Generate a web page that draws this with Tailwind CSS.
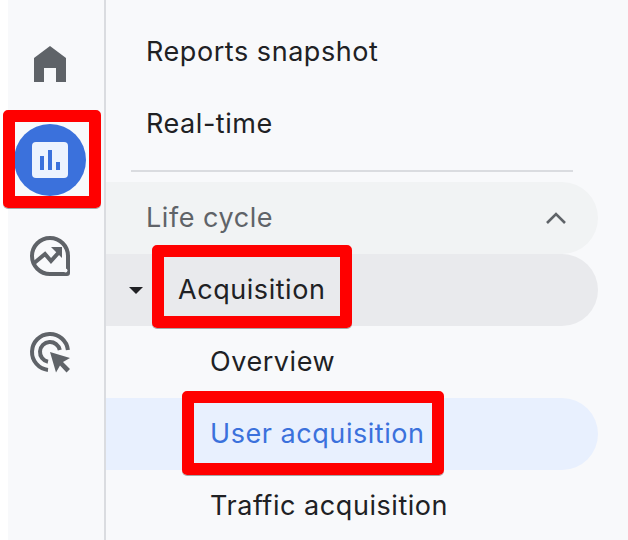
<!DOCTYPE html>
<html lang="en">
<head>
  <meta charset="UTF-8" />
  <title>Reports navigation</title>
  <script src="https://cdn.jsdelivr.net/npm/@tailwindcss/browser@4"></script>
</head>
<body class="bg-white font-['Inter',sans-serif] overflow-hidden">
  <div class="relative w-[628px] h-[540px] overflow-hidden pl-2 flex">
    <!-- icon rail -->
    <div class="w-[96px] bg-[#f8f9fb] pt-4 pr-3 flex flex-col shrink-0">
      <div class="h-24 flex items-center justify-center">
        <svg width="32" height="36" viewBox="0 0 32 36" class="fill-[#5f6368]">
          <path d="M16 0 L32 12 V36 H22 V22 H10 V36 H0 V12 Z" />
        </svg>
      </div>
      <div class="h-24 flex items-center justify-center">
        <div class="w-[72px] h-[72px] shrink-0 rounded-full bg-[#3b71dc] flex items-center justify-center">
          <div class="w-9 h-9 rounded-[4px] bg-[#edf3fe] flex items-end justify-center gap-1 pb-2">
            <div class="w-1 h-[14px] bg-[#3b71dc]"></div>
            <div class="w-1 h-5 bg-[#3b71dc]"></div>
            <div class="w-1 h-2 bg-[#3b71dc]"></div>
          </div>
        </div>
      </div>
      <div class="h-24 flex items-center justify-center">
        <svg width="40" height="40" viewBox="0 0 40 40" fill="none">
          <path d="M20 2 A18 18 0 0 1 38 20 V37 A1 1 0 0 1 37 38 H20 A18 18 0 1 1 20 2 Z" stroke="#5f6368" stroke-width="4" />
          <circle cx="35.5" cy="34.5" r="2" fill="#f8f9fb" />
          <path d="M3 28 L15 18 L21 25 L30 15" stroke="#5f6368" stroke-width="4" />
          <path d="M21 11 H32 V22 Z" fill="#5f6368" />
        </svg>
      </div>
      <div class="h-24 flex items-center justify-center">
        <svg width="40" height="40" viewBox="0 0 40 40" fill="none" class="overflow-visible">
          <path d="M18 37.9 A18 18 0 1 1 37.9 18" stroke="#5f6368" stroke-width="4" />
          <path d="M18 29.8 A10 10 0 1 1 29.8 18" stroke="#5f6368" stroke-width="4" />
          <path d="M20 20 L40 26 L33 30 L40 37 L36.5 40.5 L30 33.5 L26 40.5 Z" fill="#5f6368" />
        </svg>
      </div>
    </div>
    <div class="w-[2px] bg-[#dadce0] shrink-0"></div>

    <!-- nav list -->
    <div class="flex-1 bg-[#f8f9fb] pt-4 pr-[30px] text-[27px] font-normal tracking-[0.55px] text-[#202124]">
      <div class="h-[72px] flex items-center pl-[40px]">Reports snapshot</div>
      <div class="h-[72px] flex items-center pl-[40px]">Real-time</div>
      <div class="h-[22px] flex items-center">
        <div class="ml-[25px] w-[442px] h-[2px] bg-[#dadce0]"></div>
      </div>
      <div class="h-[72px] flex items-center justify-between pl-[40px] pr-[32px] bg-[#f1f3f4] rounded-r-[36px] text-[#5f6368]">
        <span>Life cycle</span>
        <svg width="20" height="12" viewBox="0 0 20 12" fill="none">
          <path d="M1 11 L10 2 L19 11" stroke="#5f6368" stroke-width="2.6" />
        </svg>
      </div>
      <div class="h-[72px] flex items-center pl-[23px] bg-[#e9eaed] rounded-r-[36px]">
        <span class="w-0 h-0 border-x-[7px] border-x-transparent border-t-[7px] border-t-[#202124] mr-[35px]"></span>
        <span>Acquisition</span>
      </div>
      <div class="h-[72px] flex items-center pl-[104px]">Overview</div>
      <div class="h-[72px] flex items-center pl-[104px] bg-[#e8f0fe] rounded-r-[36px] text-[#3b71dc]">User acquisition</div>
      <div class="h-[72px] flex items-center pl-[104px]">Traffic acquisition</div>
    </div>

    <!-- red annotation boxes -->
    <div class="absolute left-[3px] top-[110px] w-[98px] h-[98px] border-[12px] border-[#ff0000] rounded-[5px] shadow-[0_1px_0_#0005]"></div>
    <div class="absolute left-[152px] top-[245px] w-[200px] h-[83px] border-[12px] border-[#ff0000] rounded-[5px] shadow-[0_1px_0_#0005]"></div>
    <div class="absolute left-[182px] top-[391px] w-[262px] h-[84px] border-[12px] border-[#ff0000] rounded-[5px] shadow-[0_1px_0_#0005]"></div>
  </div>
</body>
</html>
